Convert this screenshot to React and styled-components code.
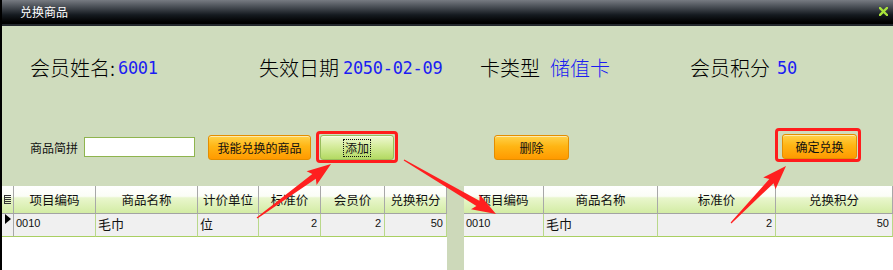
import React from "react";
import styled, { createGlobalStyle } from "styled-components";

const Global = createGlobalStyle`
  html, body { margin: 0; padding: 0; background: #cfdcbd; }
  body { font-family: "Noto Sans CJK SC", "Liberation Sans", sans-serif; }
  * { box-sizing: border-box; }
`;

const CJK = `"Noto Sans CJK SC", "Liberation Sans", sans-serif`;

const Window = styled.div`
  position: relative;
  width: 893px;
  height: 270px;
  overflow: hidden;
  border-left: 2px solid #000;
  background: #cfdcbd;
  display: flex;
  flex-direction: column;
`;

const TitleBar = styled.div`
  height: 26px;
  flex: none;
  display: flex;
  align-items: center;
  justify-content: space-between;
  padding: 0 5px 2px 18px;
  background: linear-gradient(#777b82 0%, #4a4f56 28%, #151a20 62%, #000 92%, #000 100%);
  border-bottom: 2px solid #23272d;
  color: #fff;
  font-family: ${CJK};
  font-size: 12px;
`;

const Title = styled.span`
  letter-spacing: 0;
`;

const InfoRow = styled.div`
  margin-top: 30px;
  padding-left: 28px;
  height: 24px;
  display: grid;
  grid-template-columns: 229px 221px 210px auto;
  align-items: center;
`;

const InfoItem = styled.div`
  display: flex;
  align-items: center;
  white-space: nowrap;
`;

const InfoLabel = styled.span`
  font-family: ${CJK};
  font-size: 20px;
  font-weight: 300;
  line-height: 24px;
  color: #000;
`;

const InfoValue = styled.span`
  margin-left: ${(p) => p.$gap}px;
  font-family: ${(p) => (p.$cjk ? CJK : `"DejaVu Sans Mono", monospace`)};
  font-size: ${(p) => (p.$cjk ? "20px" : "17px")};
  font-weight: ${(p) => (p.$cjk ? 300 : 400)};
  letter-spacing: ${(p) => (p.$cjk ? "0" : "-0.3px")};
  line-height: 24px;
  color: #1c1cf2;
`;

const Toolbar = styled.div`
  margin-top: 49px;
  padding-left: 28px;
  height: 36px;
  display: flex;
  align-items: center;
`;

const SmallLabel = styled.span`
  font-family: ${CJK};
  font-size: 12px;
  color: #111;
  width: 48px;
`;

const SearchInput = styled.input`
  margin-left: 6px;
  width: 111px;
  height: 20px;
  border: 1px solid #8fb44e;
  background: #fff;
  outline: none;
  padding: 0 3px;
`;

const Button = styled.button`
  margin-left: ${(p) => p.$ml || 0}px;
  width: ${(p) => p.$w}px;
  height: 25px;
  border-radius: 3px;
  padding: 0;
  font-family: ${CJK};
  font-size: 12px;
  color: #111;
  display: flex;
  align-items: center;
  justify-content: center;
  border: 1px solid ${(p) => (p.$green ? "#98bd5c" : "#e48e00")};
  background: ${(p) =>
    p.$green
      ? "linear-gradient(#eef8d2 0%, #d5ec9c 45%, #b3da62 100%)"
      : "linear-gradient(#ffd24a 0%, #ffb514 45%, #ff9a00 100%)"};
  box-shadow: inset 0 1px 0 rgba(255, 255, 255, 0.55);
`;

const FocusText = styled.span`
  border: 1px dotted #111;
  padding: 0 1px;
  line-height: 16px;
`;

const Highlight = styled.div`
  margin-left: ${(p) => p.$ml}px;
  margin-bottom: ${(p) => p.$mb || 0}px;
  border: 3px solid #ff1c1c;
  border-radius: 4px;
  padding: ${(p) => p.$pad};
  display: flex;
`;

const GridArea = styled.div`
  margin-top: 21px;
  flex: 1;
  display: flex;
`;

const Table = styled.div`
  width: ${(p) => (p.$w ? `${p.$w}px` : "auto")};
  flex: ${(p) => (p.$w ? "none" : "1")};
  background: #fff;
  display: grid;
  grid-template-columns: ${(p) => p.$cols};
  grid-auto-rows: max-content;
  align-content: start;
`;

const Strip = styled.div`
  width: 17px;
  flex: none;
  background: #cdd9ba;
`;

const HeadCell = styled.div`
  height: 28px;
  border-bottom: 1px solid #a3a3a3;
  border-right: 1px solid #a8a8a8;
  background: linear-gradient(#ffffff 0%, #fbfdf6 38%, #e9f6cd 44%, #d3eca4 100%);
  display: flex;
  align-items: center;
  justify-content: center;
  font-family: ${CJK};
  font-size: 12.5px;
  color: #111;
  white-space: nowrap;
  overflow: hidden;
`;

const DataCell = styled.div`
  height: 23px;
  border-bottom: 1px solid #a9cf62;
  border-right: 1px solid ${(p) => (p.$gray ? "#a8a8a8" : "#b9d88a")};
  background: #f0f0f0;
  display: flex;
  align-items: flex-start;
  justify-content: ${(p) => (p.$right ? "flex-end" : p.$center ? "center" : "flex-start")};
  padding: ${(p) => (p.$center ? "0" : p.$right ? "3px 3px 0 0" : "3px 0 0 2px")};
  font-family: ${(p) => (p.$cjk ? CJK : `"Liberation Sans", Arial, sans-serif`)};
  font-size: ${(p) => (p.$cjk ? "13px" : "11px")};
  line-height: ${(p) => (p.$cjk ? "14px" : "13px")};
  color: #111;
  white-space: nowrap;
  overflow: hidden;
`;

const Overlay = styled.svg`
  position: absolute;
  left: -2px;
  top: 0;
  pointer-events: none;
`;

function arrowPoints(x1, y1, x2, y2) {
  const dx = x2 - x1;
  const dy = y2 - y1;
  const L = Math.hypot(dx, dy);
  const ux = dx / L;
  const uy = dy / L;
  const nx = -uy;
  const ny = ux;
  const headLen = 21;
  const headW = 8.5;
  const shaftW = 3;
  const tailW = 0.6;
  const bx = x2 - ux * headLen;
  const by = y2 - uy * headLen;
  const wx = bx - ux * 3;
  const wy = by - uy * 3;
  const pts = [
    [x1 + nx * tailW, y1 + ny * tailW],
    [bx + nx * shaftW, by + ny * shaftW],
    [wx + nx * headW, wy + ny * headW],
    [x2, y2],
    [wx - nx * headW, wy - ny * headW],
    [bx - nx * shaftW, by - ny * shaftW],
    [x1 - nx * tailW, y1 - ny * tailW],
  ];
  return pts.map((p) => `${p[0].toFixed(1)},${p[1].toFixed(1)}`).join(" ");
}

const ListIcon = () => (
  <svg width="7" height="10" viewBox="0 0 7 10">
    {[1, 3, 5, 7, 9].map((y) => (
      <line key={y} x1="0" y1={y - 0.5} x2="7" y2={y - 0.5} stroke="#333" strokeWidth="1" />
    ))}
    <line x1="0.5" y1="0" x2="0.5" y2="9" stroke="#333" strokeWidth="1" />
  </svg>
);

const RowPointer = () => (
  <svg width="6" height="10" viewBox="0 0 6 10">
    <polygon points="0,0 6,5 0,10" fill="#000" />
  </svg>
);

const CloseIcon = () => (
  <svg width="9" height="9" viewBox="0 0 9 9">
    <path d="M1 1 L8 8 M8 1 L1 8" stroke="#a8e23a" strokeWidth="2.4" strokeLinecap="square" />
  </svg>
);

const leftCols = "12px 82px 102px 61px 62px 64px 62px";
const rightCols = "80px 114px 118px 1fr";

export default function App() {
  return (
    <>
      <Global />
      <Window>
        <TitleBar>
          <Title>兑换商品</Title>
          <CloseIcon />
        </TitleBar>

        <InfoRow>
          <InfoItem>
            <InfoLabel>会员姓名:</InfoLabel>
            <InfoValue $gap={3}>6001</InfoValue>
          </InfoItem>
          <InfoItem>
            <InfoLabel>失效日期</InfoLabel>
            <InfoValue $gap={4}>2050-02-09</InfoValue>
          </InfoItem>
          <InfoItem>
            <InfoLabel>卡类型</InfoLabel>
            <InfoValue $gap={10} $cjk>储值卡</InfoValue>
          </InfoItem>
          <InfoItem>
            <InfoLabel>会员积分</InfoLabel>
            <InfoValue $gap={7}>50</InfoValue>
          </InfoItem>
        </InfoRow>

        <Toolbar>
          <SmallLabel>商品简拼</SmallLabel>
          <SearchInput />
          <Button $ml={13} $w={103}>我能兑换的商品</Button>
          <Highlight $ml={5} $pad="1px 1px 0 1px">
            <Button $green $w={74}>
              <FocusText>添加</FocusText>
            </Button>
          </Highlight>
          <Button $ml={96} $w={75}>删除</Button>
          <Highlight $ml={206} $mb={4} $pad="3px 1px 0 4px">
            <Button $w={75}>确定兑换</Button>
          </Highlight>
        </Toolbar>

        <GridArea>
          <Table $w={445} $cols={leftCols}>
            <HeadCell><ListIcon /></HeadCell>
            <HeadCell>项目编码</HeadCell>
            <HeadCell>商品名称</HeadCell>
            <HeadCell>计价单位</HeadCell>
            <HeadCell>标准价</HeadCell>
            <HeadCell>会员价</HeadCell>
            <HeadCell>兑换积分</HeadCell>

            <DataCell $center $gray><RowPointer /></DataCell>
            <DataCell>0010</DataCell>
            <DataCell $cjk>毛巾</DataCell>
            <DataCell $cjk>位</DataCell>
            <DataCell $right>2</DataCell>
            <DataCell $right>2</DataCell>
            <DataCell $right>50</DataCell>
          </Table>
          <Strip />
          <Table $cols={rightCols}>
            <HeadCell>项目编码</HeadCell>
            <HeadCell>商品名称</HeadCell>
            <HeadCell>标准价</HeadCell>
            <HeadCell>兑换积分</HeadCell>

            <DataCell>0010</DataCell>
            <DataCell $cjk>毛巾</DataCell>
            <DataCell $right>2</DataCell>
            <DataCell $right>50</DataCell>
          </Table>
        </GridArea>

        <Overlay width="893" height="270" viewBox="0 0 893 270">
          <polygon points={arrowPoints(257, 218, 331, 164)} fill="#ff1f1f" />
          <polygon points={arrowPoints(404, 160, 496, 214)} fill="#ff1f1f" />
          <polygon points={arrowPoints(731, 223, 786, 166)} fill="#ff1f1f" />
        </Overlay>
      </Window>
    </>
  );
}
